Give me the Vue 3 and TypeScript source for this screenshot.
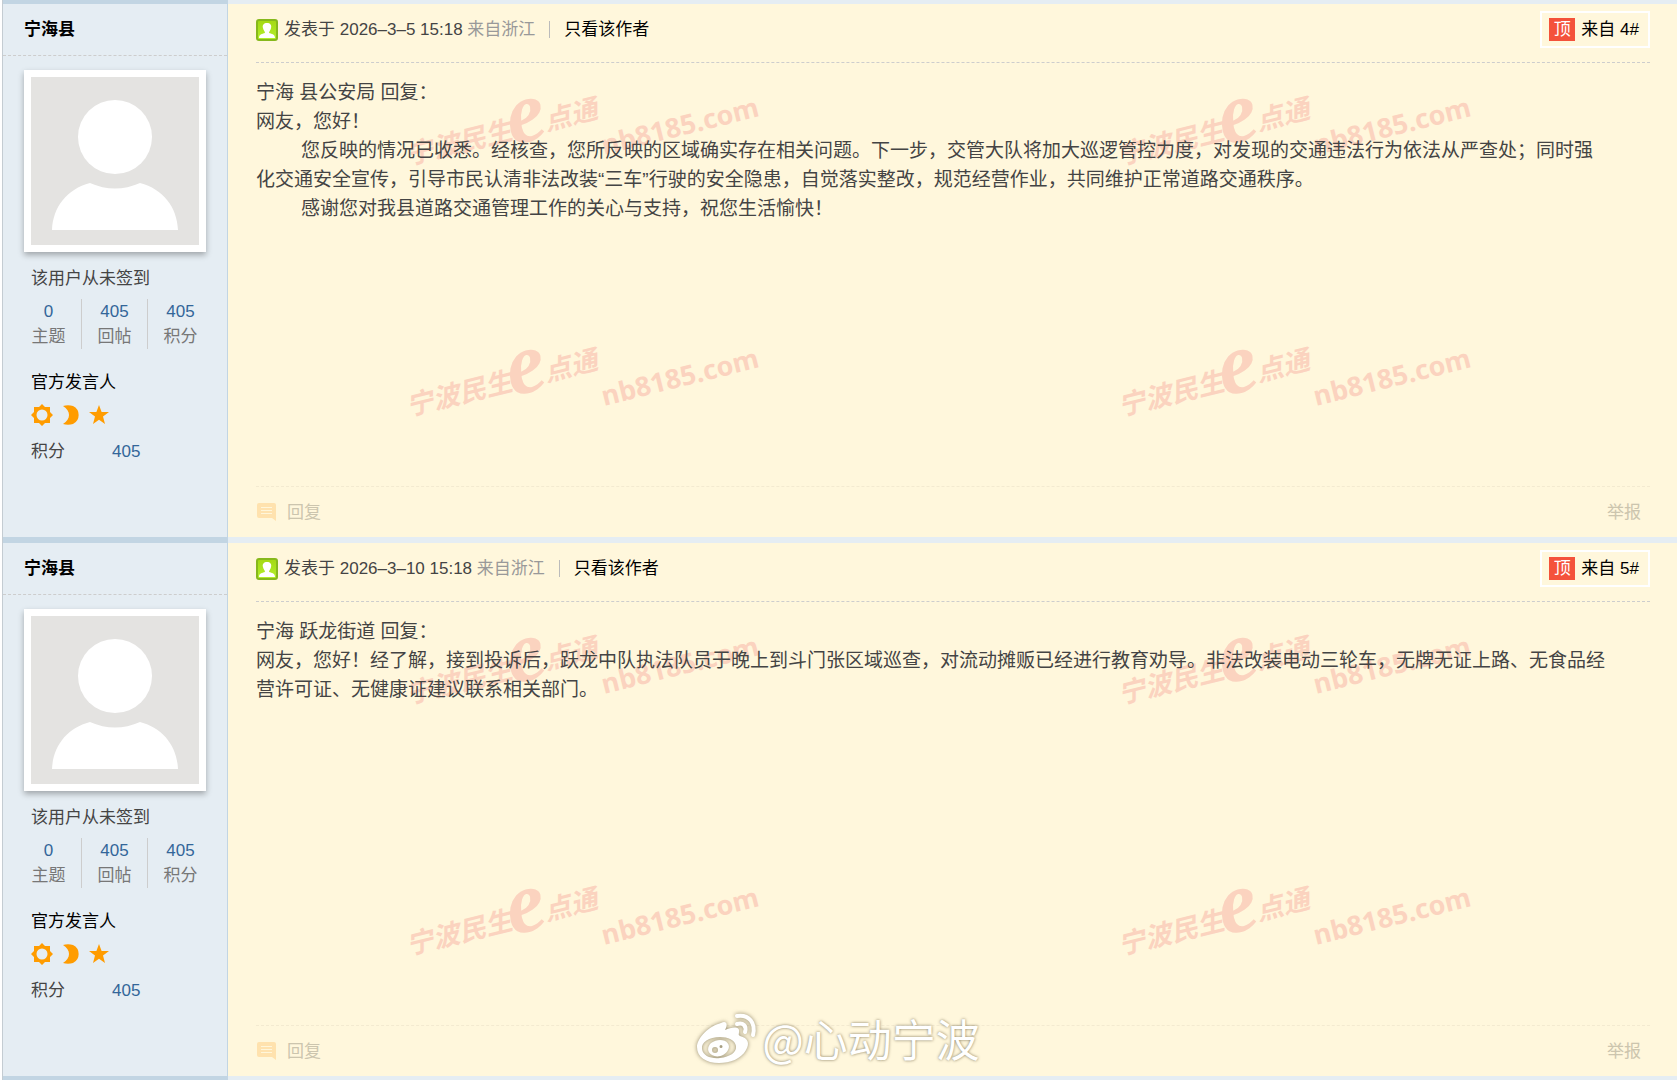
<script setup lang="ts">
interface Post {
  id: number
  author: string
  date: string
  lines: { text: string; indent?: boolean }[]
}

const posts: Post[] = [
  {
    id: 4,
    author: '宁海县',
    date: '2026–3–5 15:18',
    lines: [
      { text: '宁海 县公安局 回复：' },
      { text: '网友，您好！' },
      { text: '您反映的情况已收悉。经核查，您所反映的区域确实存在相关问题。下一步，交管大队将加大巡逻管控力度，对发现的交通违法行为依法从严查处；同时强', indent: true },
      { text: '化交通安全宣传，引导市民认清非法改装“三车”行驶的安全隐患，自觉落实整改，规范经营作业，共同维护正常道路交通秩序。' },
      { text: '感谢您对我县道路交通管理工作的关心与支持，祝您生活愉快！', indent: true },
    ],
  },
  {
    id: 5,
    author: '宁海县',
    date: '2026–3–10 15:18',
    lines: [
      { text: '宁海 跃龙街道 回复：' },
      { text: '网友，您好！经了解，接到投诉后，跃龙中队执法队员于晚上到斗门张区域巡查，对流动摊贩已经进行教育劝导。非法改装电动三轮车，无牌无证上路、无食品经' },
      { text: '营许可证、无健康证建议联系相关部门。' },
    ],
  },
]

const stats = [
  { label: '主题', value: 0 },
  { label: '回帖', value: 405 },
  { label: '积分', value: 405 },
]
</script>

<template>
  <main class="thread">
    <article v-for="post in posts" :key="post.id" class="post">
      <aside class="side">
        <h2 class="name"><a href="#">{{ post.author }}</a></h2>
        <a class="avatar" href="#" aria-label="头像">
          <svg viewBox="0 0 168 168">
            <rect width="168" height="168" fill="#e4e3e1" />
            <path d="M21 153C22 130 36 112 59 106Q84 117 109 106C132 112 146 130 147 153Z" fill="#fff" />
            <circle cx="84" cy="60" r="37" fill="#fff" />
          </svg>
        </a>
        <p class="sign">该用户从未签到</p>
        <ul class="stats">
          <li v-for="s in stats" :key="s.label">
            <a href="#">{{ s.value }}</a>
            <span>{{ s.label }}</span>
          </li>
        </ul>
        <p class="role"><a href="#">官方发言人</a></p>
        <div class="rank">
          <svg width="22" height="22" viewBox="0 0 22 22">
            <path fill="#ff9c00" fill-rule="evenodd" d="M11 0L14 3H19V8L22 11L19 14V19H14L11 22L8 19H3V14L0 11L3 8V3H8ZM11 5.500A5.500 5.500 0 1 0 11 16.500A5.500 5.500 0 1 0 11 5.500Z" />
          </svg>
          <svg width="16" height="22" viewBox="0 0 16 22">
            <path fill="#ff9c00" d="M0 2C3 1 7 1 10 2A10 10 0 0 1 10 20C7 21 3 21 0 20C8 15 8 7 0 2Z" />
          </svg>
          <svg width="20" height="22" viewBox="0 0 20 22">
            <path fill="#ff9c00" d="M10 1L12.600 8H20L14 12.600L16 20L10 15.800L4 20L6 12.600L0 8H7.400Z" />
          </svg>
        </div>
        <dl class="score">
          <dt>积分</dt>
          <dd><a href="#">405</a></dd>
        </dl>
      </aside>

      <section class="main">
        <div class="marks" aria-hidden="true">
          <svg v-for="n in 4" :key="n" width="712" height="251" viewBox="0 0 712 251">
            <g transform="translate(181 161) rotate(-14)" class="mark">
              <text class="mark-cn" x="0" y="0">宁波民生</text>
              <text class="mark-e" x="105" y="6">e</text>
              <text class="mark-cn" x="142" y="0">点通</text>
            </g>
            <text class="mark mark-url" transform="translate(376 151) rotate(-14)">nb8185.com</text>
          </svg>
        </div>

        <header class="head">
          <svg class="online" width="22" height="22" viewBox="0 0 22 22">
            <defs>
              <linearGradient :id="'g' + post.id" x1="0" y1="0" x2="0" y2="1">
                <stop offset="0" stop-color="#a4d814" />
                <stop offset="1" stop-color="#b4f02c" />
              </linearGradient>
            </defs>
            <rect x="1" y="1" width="20" height="20" rx="2" :fill="`url(#g${post.id})`" stroke="#86b81c" stroke-width="2" />
            <path fill="#fff" d="M11 4C14 4 16 6 15 9C15 11 13 12 13 14C16 15 19 15 19 19H3C3 15 6 15 9 14C9 12 7 11 7 9C6 6 8 4 11 4Z" />
          </svg>
          <p class="when">发表于 {{ post.date }} <span>来自浙江</span></p>
          <a class="only" href="#">只看该作者</a>
          <a class="floor" href="#"><b>顶</b>来自 {{ post.id }}#</a>
        </header>

        <div class="body">
          <p v-for="(line, i) in post.lines" :key="i" :class="{ indent: line.indent }">{{ line.text }}</p>
        </div>

        <footer class="foot">
          <a class="reply" href="#">
            <svg width="20" height="20" viewBox="0 0 20 20">
              <path fill="#ffe2ae" d="M3 1H18Q20 1 20 3V19L16 16H3Q1 16 1 14V3Q1 1 3 1Z" />
              <path stroke="#fff6da" stroke-width="1" d="M5 5.500H16M5 8.500H16M5 11.500H16" />
            </svg>
            回复
          </a>
          <a href="#">举报</a>
        </footer>
      </section>
    </article>
    <div class="end"></div>

    <div class="credit">
      <svg width="62" height="52" viewBox="0 0 62 52">
        <path fill="#fff" fill-rule="evenodd" d="M25 11C31 8 32 13 29 18C36 15 44 14 43 20C43 22 42 23 44 24C52 26 54 31 50 38C45 47 34 51 23 51C10 51 1 45 1 35C1 26 13 14 25 11ZM24 25C13 25 5 30 6 37C7 44 15 47 24 46C34 45 41 40 40 34C39 28 32 25 24 25Z" />
        <path fill="#fff" fill-rule="evenodd" d="M24 28C31 28 35 33 32 38C29 44 21 46 16 43C11 40 11 35 15 31C18 29 21 28 24 28ZM19 35A3 3 0 1 0 19 41A3 3 0 1 0 19 35ZM25 33A1 1 0 1 0 25 36A1 1 0 1 0 25 33Z" />
        <path fill="none" stroke="#fff" stroke-width="4" stroke-linecap="round" d="M41 12C47 10 51 14 49 20M41 4C53 2 60 11 57 23" />
      </svg>
      <span>@心动宁波</span>
    </div>
  </main>
</template>

<style>
body {
  margin: 0;
  background: #fff;
}
</style>

<style scoped>
.thread {
  position: relative;
  margin-left: 2px;
  border-left: 1px solid #c4ccd2;
  font: 17px/25px "Liberation Sans", "Noto Sans CJK SC", sans-serif;
  color: #444;
}
p, h2, ul, dl, dd {
  margin: 0;
  padding: 0;
}
a {
  color: inherit;
  text-decoration: none;
}
svg {
  display: block;
  flex: none;
}
.post {
  display: flex;
  min-height: 537px;
}
.post + .post {
  min-height: 539px;
}
.side {
  flex: none;
  width: 224px;
  border-right: 1px solid #c2d5e3;
  border-top: 4px solid #c2d5e3;
  background: #e5edf3;
}
.main {
  position: relative;
  flex: 1;
  min-width: 0;
  display: flex;
  flex-direction: column;
  padding: 0 27px 0 28px;
  border-top: 4px solid #e5edf3;
  background: #fff7dc;
}
.post + .post .side,
.post + .post .main {
  border-top-width: 6px;
}
.name {
  padding: 13px 21px;
  border-bottom: 1px dashed #cdcdcd;
  font-size: 17px;
  line-height: 25px;
  color: #000;
}
.avatar {
  display: block;
  width: 168px;
  margin: 14px 0 0 21px;
  border: 7px solid #fff;
  box-shadow: 0 3px 6px rgba(0, 0, 0, 0.3);
}
.sign {
  margin: 14px 0 0 28px;
}
.stats {
  display: flex;
  width: 197px;
  margin: 8px 0 0 13px;
  list-style: none;
}
.stats li {
  flex: 1;
  height: 50px;
  display: flex;
  flex-direction: column;
  text-align: center;
  color: #777;
}
.stats li + li {
  border-left: 1px solid #cdcdcd;
}
.stats a,
.score a {
  color: #369;
}
.role {
  margin: 21px 0 0 28px;
  color: #000;
}
.rank {
  display: flex;
  gap: 10px;
  margin: 9px 0 0 28px;
}
.score {
  display: flex;
  margin: 13px 0 0 28px;
}
.score dt {
  width: 81px;
}
.marks {
  position: absolute;
  inset: 0;
  display: grid;
  grid-template-columns: 712px 712px;
  align-content: start;
  overflow: hidden;
  pointer-events: none;
}
.mark {
  fill: #fbd3bf;
}
.mark-cn {
  font: italic 700 27px "Noto Sans CJK SC", sans-serif;
}
.mark-e {
  font: italic 700 88px "Liberation Serif", serif;
}
.mark-url {
  font: 700 27px "Open Sans", sans-serif;
}
.head {
  position: relative;
  display: flex;
  align-items: center;
  height: 59px;
  border-bottom: 1px dashed #cdcdcd;
  box-sizing: border-box;
  padding-bottom: 7px;
}
.when {
  margin-left: 6px;
  white-space: nowrap;
}
.when span {
  color: #999;
}
.only {
  display: flex;
  align-items: center;
  margin-left: 14px;
  color: #000;
}
.only::before {
  content: "";
  width: 1px;
  height: 17px;
  margin-right: 14px;
  background: #bbb;
}
.floor {
  display: flex;
  align-items: center;
  margin-left: auto;
  padding: 4px 9px 4px 7px;
  border: 2px solid #fff;
  color: #000;
}
.floor b {
  width: 26px;
  margin-right: 6px;
  background: #f4523b;
  color: #fff;
  font-weight: 400;
  line-height: 23px;
  text-align: center;
}
.body {
  position: relative;
  flex: 1;
  padding-top: 15px;
  font-size: 19px;
  line-height: 29px;
}
.indent {
  padding-left: 45px;
}
.foot {
  position: relative;
  display: flex;
  align-items: center;
  justify-content: space-between;
  height: 50px;
  padding-right: 9px;
  border-top: 1px dashed #f3ead0;
  color: #ccc5ae;
}
.reply {
  display: flex;
  align-items: center;
  gap: 11px;
}
.end {
  height: 4px;
  background: linear-gradient(to right, #c2d5e3 225px, #e5edf3 225px);
}
.credit {
  position: absolute;
  left: 0;
  right: 4px;
  bottom: 12px;
  display: flex;
  align-items: center;
  justify-content: center;
  gap: 4px;
  color: #fff;
  font-size: 44px;
  line-height: 60px;
  text-shadow: 0 0 3px rgba(70, 60, 30, 0.7);
}
.credit svg {
  filter: drop-shadow(0 0 2px rgba(70, 60, 30, 0.6));
}
.credit span {
  font-family: "Noto Sans CJK SC", sans-serif;
}
</style>
